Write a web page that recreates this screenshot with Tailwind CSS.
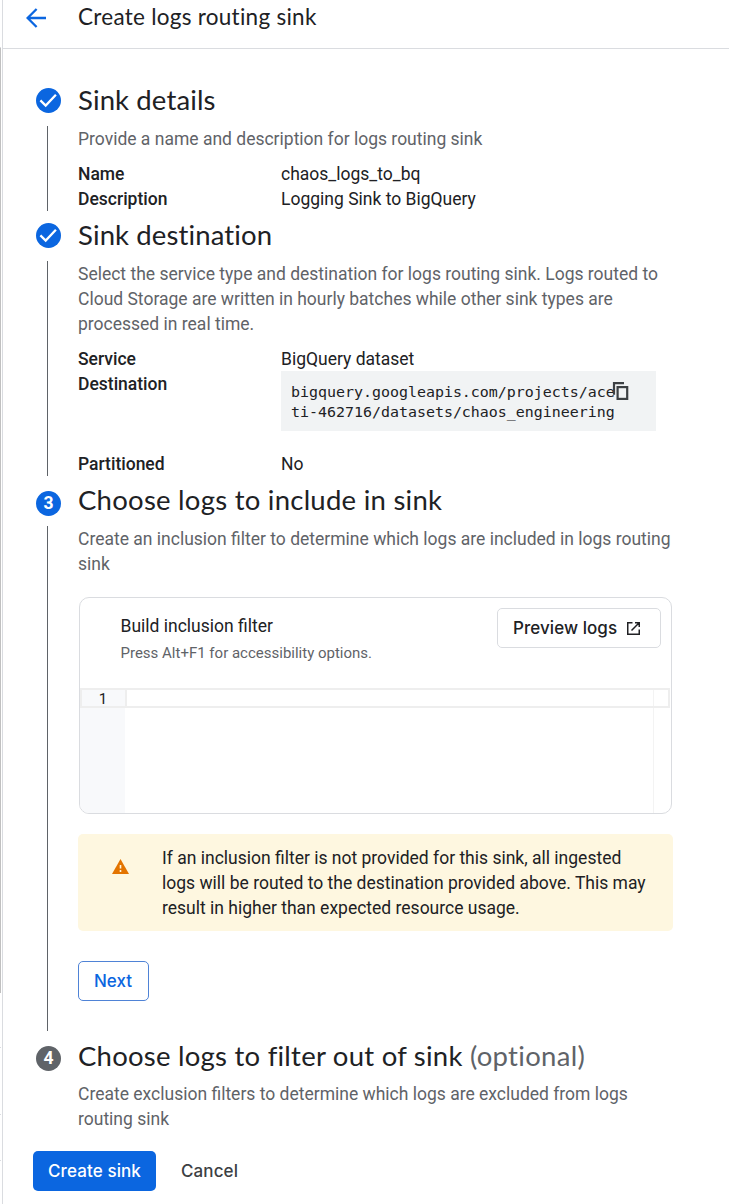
<!DOCTYPE html>
<html lang="en">
<head>
<meta charset="utf-8">
<title>Create logs routing sink</title>
<script src="https://cdn.jsdelivr.net/npm/@tailwindcss/browser@4"></script>
</head>
<body class="bg-white font-[Roboto,sans-serif] text-[17.5px] leading-[25px] text-[#202124]">
<div class="flex h-[1204px] overflow-hidden">
  <!-- Edge of the side navigation -->
  <aside class="flex w-[3px] shrink-0 border-r border-[#dadce0]">
    <div class="flex w-px flex-col">
      <div class="h-[47px] border-b border-[#dadce0] box-content"></div>
      <div class="h-[945px] bg-[#c0c0c0]"></div>
      <div class="h-[55px] border-b border-[#dadce0]"></div>
      <div class="h-[67px] border-b border-[#dadce0]"></div>
      <div class="h-[46px] border-b border-[#dadce0]"></div>
    </div>
  </aside>

  <div class="flex min-w-0 flex-1 flex-col">
    <header class="flex h-[49px] items-start border-b border-[#dadce0] pl-[23px]">
      <svg class="mt-[8px] h-5 w-5 shrink-0" viewBox="0 0 20 20" fill="none" stroke="#0b66e0" stroke-width="2.3"><path d="M20 10H1.8M10.6 1L1.6 10l9 9"/></svg>
      <h1 class="ml-[32px] mt-[2px] font-[Lato,sans-serif] text-[22.5px] leading-[30px] tracking-[0.27px]">Create logs routing sink</h1>
    </header>

    <main class="flex flex-col pl-[30px] pt-[37px]">
      <!-- Step 1 -->
      <section class="flex h-[137px]">
        <div class="flex w-[45px] shrink-0 flex-col">
          <svg class="ml-[3px] mt-[2px] h-[25px] w-[25px]" viewBox="0 0 25 25"><circle cx="12.5" cy="12.5" r="12.5" fill="#0b66e0"/><path d="M4.4 12.4l5.3 5.2L19.9 6.8" fill="none" stroke="#fff" stroke-width="2.3"/></svg>
          <div class="ml-[14px] mt-[13px] h-[85px] w-px bg-[#5f6368]"></div>
        </div>
        <div>
          <h2 class="-mt-px font-[Lato,sans-serif] text-[27.5px] leading-[30px] tracking-[0.12px]">Sink details</h2>
          <p class="mt-[12px] text-[#5f6368]">Provide a name and description for logs routing sink</p>
          <dl class="mt-[10px] grid grid-cols-[203px_auto]">
            <dt class="font-medium">Name</dt><dd>chaos_logs_to_bq</dd>
            <dt class="font-medium">Description</dt><dd>Logging Sink to BigQuery</dd>
          </dl>
        </div>
      </section>

      <!-- Step 2 -->
      <section class="flex h-[265px]">
        <div class="flex w-[45px] shrink-0 flex-col">
          <svg class="ml-[3px] h-[25px] w-[25px]" viewBox="0 0 25 25"><circle cx="12.5" cy="12.5" r="12.5" fill="#0b66e0"/><path d="M4.4 12.4l5.3 5.2L19.9 6.8" fill="none" stroke="#fff" stroke-width="2.3"/></svg>
          <div class="ml-[14px] mt-[13px] h-[215px] w-px bg-[#5f6368]"></div>
        </div>
        <div>
          <h2 class="-mt-[3px] font-[Lato,sans-serif] text-[27.5px] leading-[30px] tracking-[0.12px]">Sink destination</h2>
          <p class="mt-[12px] w-[595px] text-[#5f6368]">Select the service type and destination for logs routing sink. Logs routed to<br>Cloud Storage are written in hourly batches while other sink types are<br>processed in real time.</p>
          <dl class="mt-[10px] grid grid-cols-[203px_375px]">
            <dt class="font-medium">Service</dt><dd>BigQuery dataset</dd>
            <dt class="font-medium">Destination</dt>
            <dd class="relative -mt-px mb-[21px] h-[60px] bg-[#f1f3f4] pl-[10px] pt-[11px] font-['DejaVu_Sans_Mono',monospace] text-[14.95px] leading-5">bigquery.googleapis.com/projects/ace<br>ti-462716/datasets/chaos_engineering
              <svg class="absolute left-[331px] top-[11px] h-[18px] w-[17px]" viewBox="0 0 17 18" fill="none" stroke="#3c4043" stroke-width="2.2"><path d="M2 12.8V1.2h10"/><rect x="5.6" y="5.1" width="9.6" height="11.8" fill="#f1f3f4"/></svg>
            </dd>
            <dt class="font-medium">Partitioned</dt><dd>No</dd>
          </dl>
        </div>
      </section>

      <!-- Step 3 -->
      <section class="flex h-[556px]">
        <div class="flex w-[45px] shrink-0 flex-col">
          <div class="ml-[3px] mt-[3px] flex h-[25px] w-[25px] items-center justify-center rounded-full bg-[#0b66e0] text-[17.5px] font-bold text-white">3</div>
          <div class="ml-[14px] mt-[10px] h-[505px] w-px bg-[#5f6368]"></div>
        </div>
        <div class="w-[595px]">
          <h2 class="-mt-[3px] font-[Lato,sans-serif] text-[27.5px] leading-[30px] tracking-[0.25px]">Choose logs to include in sink</h2>
          <p class="mt-[12px] text-[#5f6368]">Create an inclusion filter to determine which logs are included in logs routing<br>sink</p>

          <div class="ml-px mt-[20px] h-[217px] w-[593px] overflow-hidden rounded-[10px] border border-[#dadce0]">
            <div class="flex h-[90px] justify-between pl-[40.5px] pr-[10px]">
              <div class="pt-[16px]">
                <h3>Build inclusion filter</h3>
                <p class="mt-[4px] text-[15px] leading-5 text-[#5f6368]">Press Alt+F1 for accessibility options.</p>
              </div>
              <button class="mt-[10px] flex h-10 w-[164px] items-center rounded-[5px] border border-[#dadce0] pl-[15px] font-[Inter,sans-serif] text-[17px] font-medium">
                <span class="w-[114px] text-left tracking-[0.06px]">Preview logs</span>
                <svg class="h-[13px] w-[13px]" viewBox="0 0 13 13" fill="none" stroke="#202124" stroke-width="1.5"><path d="M5.5.75H.75v11.5h11.5V7.5M8 .75h4.25V5M12.2.8L4.5 8.5"/></svg>
              </button>
            </div>
            <div class="flex h-[125px]">
              <div class="w-[45px] bg-[#f8f9fb]">
                <div class="h-5 border-2 border-r-0 border-[#eeeeee] pr-[1px] text-center text-[15px] leading-[18px] text-[#202124]">1</div>
              </div>
              <div class="flex-1">
                <div class="mr-[1px] flex h-5 justify-end border-2 border-[#eeeeee]"><div class="w-[15px] border-l border-[#f3f3f3]"></div></div>
                <div class="ml-auto mr-[1px] h-[105px] w-[17px] border-l border-[#f3f3f3]"></div>
              </div>
            </div>
          </div>

          <div class="mt-5 flex h-[97px] rounded-[5px] bg-[#fef7e0] pt-[12px]">
            <svg class="ml-[34px] mt-[13px] h-[15px] w-[17px] shrink-0" viewBox="0 0 17 15"><path d="M8.5 0L17 15H0z" fill="#e37400"/><path d="M8.5 6v3.6M8.5 11v2" stroke="#fef7e0" stroke-width="1.6"/></svg>
            <p class="ml-[33px]">If an inclusion filter is not provided for this sink, all ingested<br>logs will be routed to the destination provided above. This may<br>result in higher than expected resource usage.</p>
          </div>

          <button class="mt-[30px] h-10 w-[71px] rounded-[5px] border border-[#4f83d6] pr-px font-[Inter,sans-serif] text-[17px] font-medium text-[#0b66e0]">Next</button>
        </div>
      </section>

      <!-- Step 4 -->
      <section class="flex h-[107px]">
        <div class="w-[45px] shrink-0">
          <div class="ml-[3px] mt-[2px] flex h-[25px] w-[25px] items-center justify-center rounded-full bg-[#5f6368] text-[17.5px] font-bold text-white">4</div>
        </div>
        <div>
          <h2 class="-mt-[3px] font-[Lato,sans-serif] text-[27.5px] leading-[30px] tracking-[0.24px]">Choose logs to filter out of sink <span class="tracking-[0.3px] text-[#5f6368]">(optional)</span></h2>
          <p class="mt-[11px] text-[#5f6368]">Create exclusion filters to determine which logs are excluded from logs<br>routing sink</p>
        </div>
      </section>

      <footer class="flex h-10 items-center font-[Inter,sans-serif] text-[17px] font-medium">
        <button class="h-10 w-[123px] rounded-[5px] bg-[#0b66e0] text-white tracking-[0.1px]">Create sink</button>
        <button class="ml-[25px] text-[#3c4043] tracking-[0.1px]">Cancel</button>
      </footer>
    </main>
  </div>
</div>
</body>
</html>
